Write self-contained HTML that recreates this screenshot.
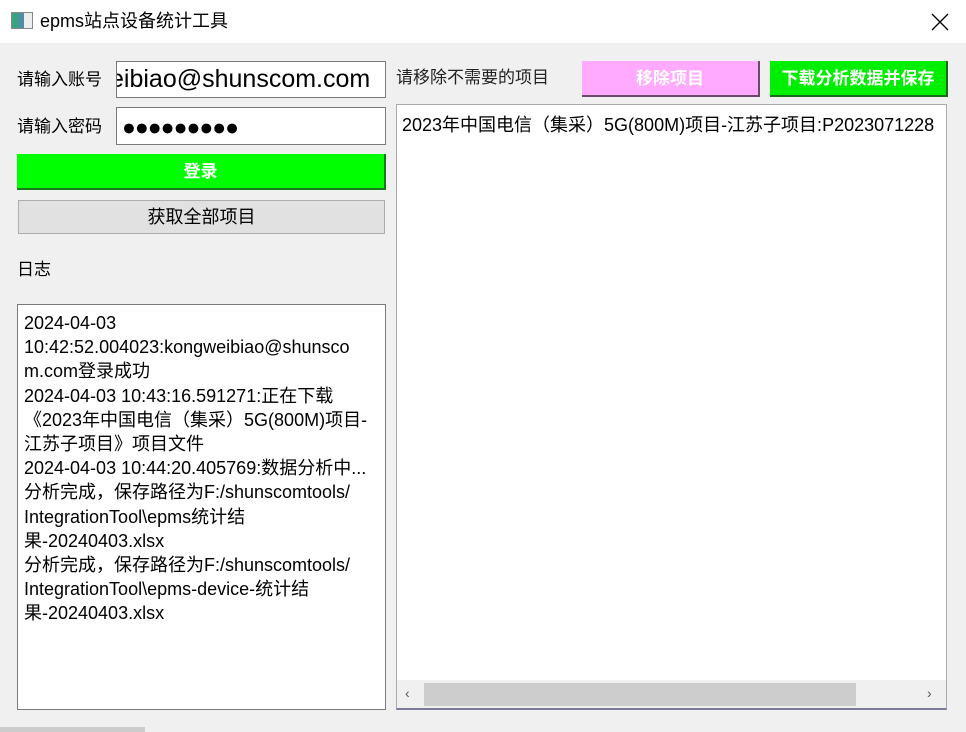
<html><head><style>
body{margin:0;width:966px;height:732px;background:#f0f0f0;font-family:"Liberation Sans","Noto Sans CJK SC",sans-serif;position:relative;overflow:hidden;color:#000}
.a{position:absolute;box-sizing:border-box}
</style></head><body>
<div class="a" style="left:0;top:0;width:966px;height:43px;background:#fff"></div>
<div class="a" style="left:11px;top:12px;width:22px;height:17px;border:1px solid #888;background:linear-gradient(90deg,#3a7 0,#58a 60%,#eee 60%)"></div>
<div class="a" style="left:40px;top:9px;font-size:18px;line-height:24px">epms站点设备统计工具</div>
<svg class="a" style="left:931px;top:13px" width="18" height="18"><path d="M1 1L17 17M17 1L1 17" stroke="#000" stroke-width="1.3"/></svg>
<div class="a" style="left:17px;top:69px;font-size:17px;line-height:22px">请输入账号</div>
<div class="a" style="left:116px;top:61px;width:270px;height:37px;background:#fff;border:1px solid #7a7a7a;overflow:hidden;font-size:25px;line-height:35px;white-space:nowrap"><span style="margin-left:-7px">eibiao@shunscom.com</span></div>
<div class="a" style="left:17px;top:116px;font-size:17px;line-height:22px">请输入密码</div>
<div class="a" style="left:116px;top:107px;width:270px;height:38px;background:#fff;border:1px solid #7a7a7a;font-size:23px;line-height:38px;padding-left:5px;letter-spacing:-1px">●●●●●●●●●</div>
<div class="a" style="left:17px;top:154px;width:369px;height:36px;background:#00ff00;border-right:2px solid #1a7a1a;border-bottom:2px solid #1a7a1a;color:#fff;font-weight:bold;font-size:17px;text-align:center;line-height:35px">登录</div>
<div class="a" style="left:18px;top:200px;width:367px;height:34px;background:#e1e1e1;border:1px solid #adadad;font-size:18px;text-align:center;line-height:32px">获取全部项目</div>
<div class="a" style="left:17px;top:259px;font-size:17px;line-height:22px">日志</div>
<div class="a" style="left:17px;top:304px;width:369px;height:406px;background:#fff;border:1px solid #7a7a7a;padding:6px 6px;font-size:18px;line-height:24.2px">2024-04-03<br>10:42:52.004023:kongweibiao@shunsco<br>m.com登录成功<br>2024-04-03 10:43:16.591271:正在下载<br>《2023年中国电信（集采）5G(800M)项目-<br>江苏子项目》项目文件<br>2024-04-03 10:44:20.405769:数据分析中...<br>分析完成，保存路径为F:/shunscomtools/<br>IntegrationTool\epms统计结<br>果-20240403.xlsx<br>分析完成，保存路径为F:/shunscomtools/<br>IntegrationTool\epms-device-统计结<br>果-20240403.xlsx</div>
<div class="a" style="left:396px;top:67px;font-size:17px;line-height:22px;color:#222">请移除不需要的项目</div>
<div class="a" style="left:582px;top:61px;width:178px;height:36px;background:#ffaaff;border-right:2px solid #6a4a6a;border-bottom:2px solid #6a4a6a;color:#fff;font-weight:bold;font-size:17px;text-align:center;line-height:35px">移除项目</div>
<div class="a" style="left:770px;top:61px;width:178px;height:36px;background:#00ee00;border-right:2px solid #1a6a1a;border-bottom:2px solid #1a6a1a;color:#fff;font-weight:bold;font-size:17px;text-align:center;line-height:35px">下载分析数据并保存</div>
<div class="a" style="left:396px;top:104px;width:551px;height:606px;background:#fff;border:1px solid #aaa;border-bottom:2px solid #7a7a9a;overflow:hidden">
<div class="a" style="left:5px;top:6px;font-size:18px;white-space:nowrap">2023年中国电信（集采）5G(800M)项目-江苏子项目:P2023071228</div>
<div class="a" style="left:0;top:575px;width:549px;height:28px;background:#f0f0f0"></div>
<div class="a" style="left:27px;top:578px;width:432px;height:23px;background:#cdcdcd"></div>
<div class="a" style="left:8px;top:580px;font-size:14px;color:#555">‹</div>
<div class="a" style="left:530px;top:580px;font-size:14px;color:#555">›</div>
</div>
<div class="a" style="left:0;top:727px;width:145px;height:5px;background:#ccc"></div>
</body></html>
